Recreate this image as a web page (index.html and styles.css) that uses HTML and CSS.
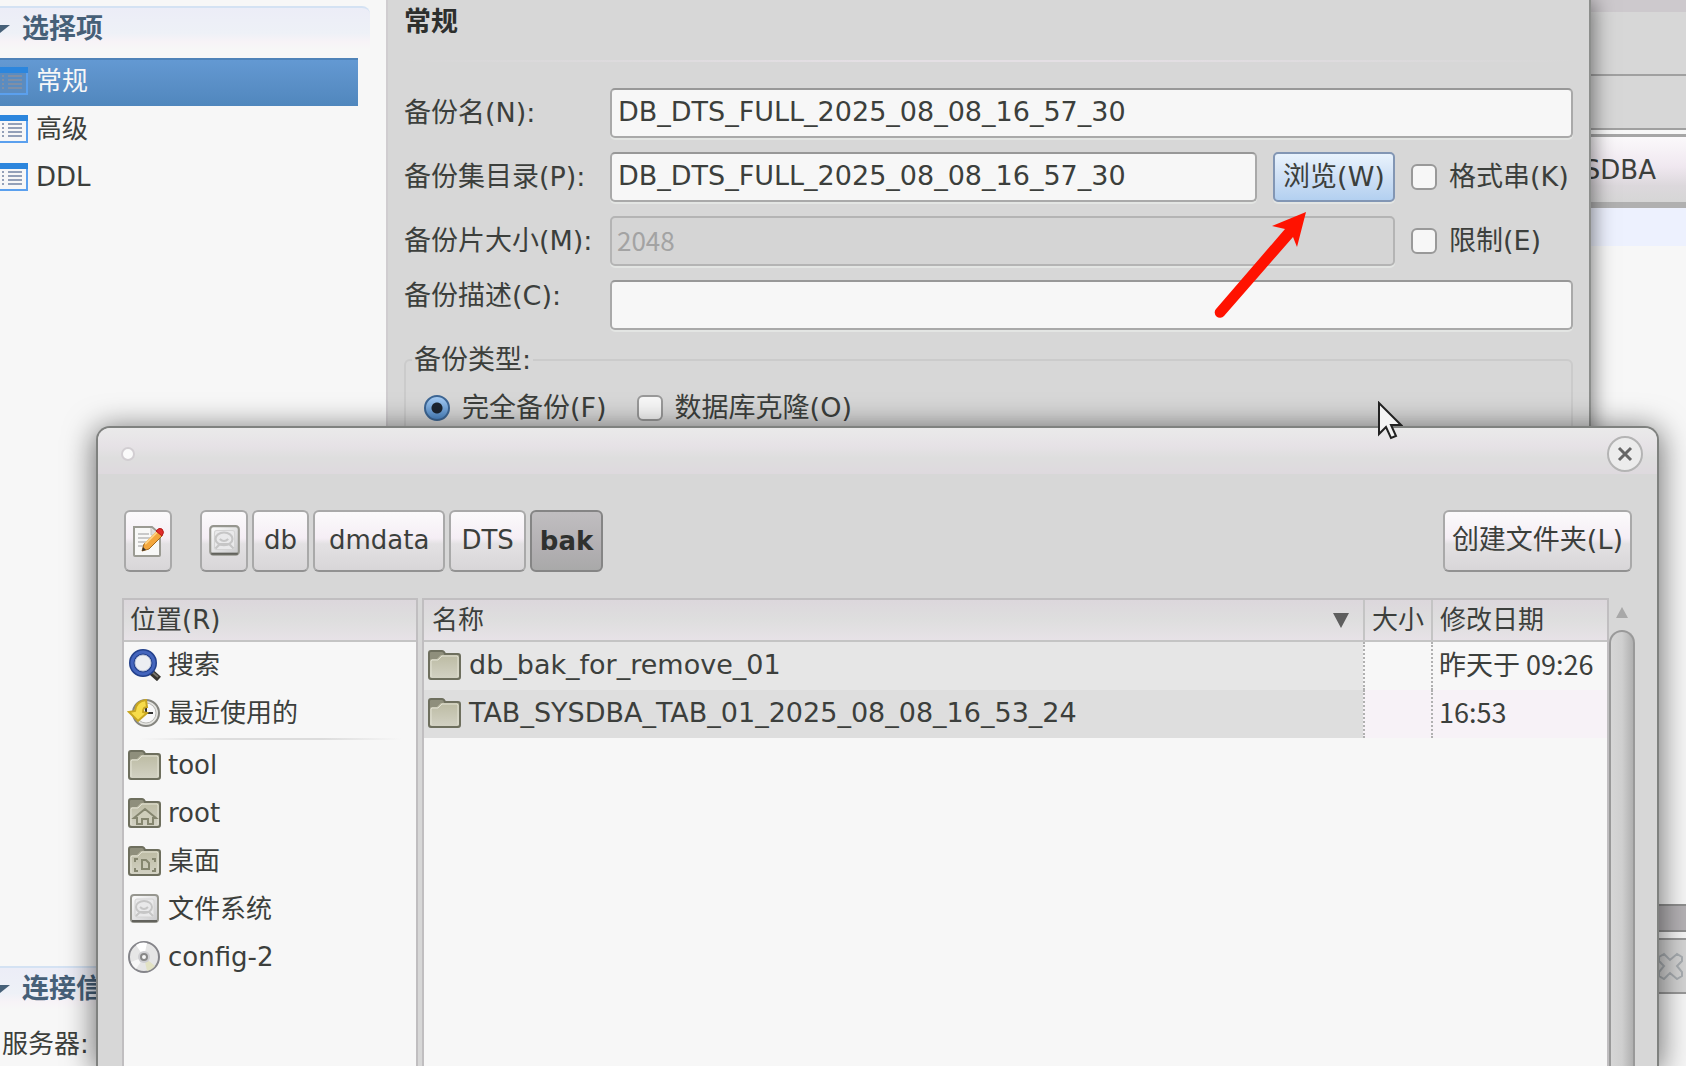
FILE: index.html
```html
<!DOCTYPE html>
<html lang="zh-CN">
<head>
    <meta charset="UTF-8">
    <meta name="viewport" content="width=device-width, initial-scale=1.0">
    <title>新建库备份</title>
    <link rel="stylesheet" href="styles.css">
</head>
<body>
    <!-- Shared icons -->
    <svg class="sprite" aria-hidden="true">
        <defs>
            <linearGradient id="folder-fill" x1="0" y1="0" x2="0" y2="1">
                <stop offset="0" stop-color="#bcbba3"/>
                <stop offset="1" stop-color="#d2d1c3"/>
            </linearGradient>
            <linearGradient id="metal" x1="0" y1="0" x2="1" y2="1">
                <stop offset="0" stop-color="#fdfdfd"/>
                <stop offset="1" stop-color="#c9c9cb"/>
            </linearGradient>
            <symbol id="i-page" viewBox="0 0 28 28">
                <path d="M0 1h28v27H0z" fill="#5ba0ee" stroke="none"/>
                <path d="M0 0h28v6H0z" fill="#2c86dd" stroke="none"/>
                <path d="M0 6h26v20H0z" stroke="none"/>
                <path d="M8 9h14M8 13h14M8 17h14M8 21h14M2 9h2M2 13h2M2 17h2M2 21h2" stroke-width="2"/>
            </symbol>
            <symbol id="i-folder" viewBox="0 0 34 32">
                <path d="M2 8V4q0-2 2-2h11q2 0 3 3h13q2 0 2 2v21q0 2-2 2H4q-2 0-2-2z" fill="#8f8f7c" stroke="#6e6f5e" stroke-width="2"/>
                <path d="M3 12q0-2 2-2h5l4-4h16q2 0 2 2v19q0 2-2 2H5q-2 0-2-2z" fill="url(#folder-fill)"/>
                <path d="M4 28V12l1-1h6l4-4h15l1 1v20" fill="none" stroke="#e2e1d3"/>
            </symbol>
            <symbol id="i-drive" viewBox="0 0 34 32">
                <rect x="4" y="2" width="27" height="27" rx="3" fill="url(#metal)" stroke="#96968f" stroke-width="2"/>
                <path d="M5 28h25" stroke="#62625c" stroke-width="2"/>
                <rect x="8" y="6" width="19" height="18" rx="2" fill="#e9e9ea" stroke="#d4d4d4"/>
                <ellipse cx="17" cy="14" rx="8" ry="6" fill="none" stroke="#c6c6c6" stroke-width="2"/>
                <path d="M9 23l4-4h9l4 4M13 14q4 4 8 0" fill="none" stroke="#c6c6c6" stroke-width="2"/>
            </symbol>
        </defs>
    </svg>

    <div class="desktop">
        <!-- Main application -->
        <div class="app">
            <div class="app-menu"></div>
            <div class="app-toolbar"></div>
            <div class="app-toolbar app-toolbar-low"></div>
            <div class="app-tab">SDBA</div>
            <div class="app-line"></div>
            <div class="app-editor"></div>
            <div class="app-splitter"></div>
            <div class="app-views">
                <svg class="view-close" viewBox="0 0 28 28"><path d="M3 5l5-3 6 6 7-6 5 3v4l-5 5 5 6v4l-5 3-7-6-6 6-5-3v-4l5-6-5-5z" fill="none" stroke="#a9aeb2" stroke-width="2"/></svg>
            </div>
            <div class="app-footer"></div>
        </div>

        <!-- Backup dialog -->
        <div class="backup">
            <aside class="side">
                <h2 class="side-title"><span class="caret"></span>选择项</h2>
                <nav class="side-nav">
                    <button class="side-item active"><svg><use href="#i-page"/></svg>常规</button>
                    <button class="side-item"><svg><use href="#i-page"/></svg>高级</button>
                    <button class="side-item"><svg><use href="#i-page"/></svg>DDL</button>
                </nav>
                <h2 class="side-title side-title-low"><span class="caret"></span>连接信息</h2>
                <p class="side-server">服务器:</p>
            </aside>

            <main class="general">
                <h1>常规</h1>
                <form class="form">
                    <label for="name">备份名(N):</label>
                    <input id="name" class="field span-all" type="text" value="DB_DTS_FULL_2025_08_08_16_57_30">

                    <label for="dir">备份集目录(P):</label>
                    <input id="dir" class="field" type="text" value="DB_DTS_FULL_2025_08_08_16_57_30">
                    <button type="button" class="browse">浏览(W)</button>
                    <label class="check"><input type="checkbox">格式串(K)</label>

                    <label for="size">备份片大小(M):</label>
                    <input id="size" class="field span-two" type="text" value="2048" disabled>
                    <label class="check"><input type="checkbox">限制(E)</label>

                    <label for="desc" class="label-top">备份描述(C):</label>
                    <input id="desc" class="field span-all" type="text">

                    <fieldset class="types">
                        <legend>备份类型:</legend>
                        <label class="check"><input type="radio" name="type" checked>完全备份(F)</label>
                        <label class="check"><input type="checkbox">数据库克隆(O)</label>
                    </fieldset>
                </form>
            </main>

            <svg class="arrow" viewBox="0 0 100 115">
                <path d="M95 5L61 19l13 3L5 102a5 5 0 0 0 8 7l69-79 4 10z" fill="#ff1200"/>
            </svg>
        </div>

        <!-- Folder chooser -->
        <div class="chooser">
            <header class="titlebar">
                <span class="dot"></span>
                <button class="close" aria-label="关闭"><svg viewBox="0 0 16 16"><path d="M2 2l12 12M14 2L2 14" stroke="#666" stroke-width="3"/></svg></button>
            </header>

            <div class="toolbar">
                <button class="btn btn-icon btn-edit" aria-label="输入文件名">
                    <svg viewBox="0 0 34 34">
                        <path d="M3 3h18l8 7v21q0 1-1 1H4q-1 0-1-1z" fill="#f8f8f7" stroke="#9b9b93" stroke-width="2"/>
                        <path d="M20 4v7h8" fill="#ddd" stroke="#c4c4c0"/>
                        <path d="M7 10h11M7 14h12M7 18h8M7 22h6" stroke="#c9c9c9" stroke-width="2"/>
                        <path d="M11 27l2-7L26 7l5 5-13 13z" fill="#f3a63c" stroke="#a4681c"/>
                        <path d="M14 20L26 8" stroke="#ffd385" stroke-width="2"/>
                        <path d="M11 27l1-4 3 3z" fill="#333"/>
                        <path d="M25 7q3-4 6-2 3 3 0 7z" fill="#e02a2a" stroke="#b51a1a"/>
                    </svg>
                </button>
                <button class="btn btn-icon" aria-label="文件系统"><svg><use href="#i-drive"/></svg></button>
                <button class="btn">db</button>
                <button class="btn btn-wide">dmdata</button>
                <button class="btn">DTS</button>
                <button class="btn btn-current">bak</button>
                <button class="btn btn-create">创建文件夹(L)</button>
            </div>

            <div class="panes">
                <section class="places">
                    <h3>位置(R)</h3>
                    <button class="place">
                        <svg viewBox="0 0 34 32">
                            <path d="M23 22l9 8" stroke="#36342f" stroke-width="6"/>
                            <path d="M24 22l7 6" stroke="#77736b" stroke-width="2"/>
                            <circle cx="16" cy="14" r="11" fill="#eef0f4" stroke="#22408c" stroke-width="6"/>
                            <circle cx="16" cy="14" r="11" fill="none" stroke="#4465bd" stroke-width="3"/>
                            <circle cx="16" cy="14" r="8" fill="#eceef2" stroke="#b6bfd6"/>
                        </svg>搜索</button>
                    <button class="place">
                        <svg viewBox="0 0 34 32">
                            <circle cx="19" cy="16" r="13" fill="#e4e4e0" stroke="#85857f" stroke-width="2"/>
                            <circle cx="19" cy="16" r="10" fill="#f8f8f8" stroke="#b9b9b5"/>
                            <path d="M19 8v8h7" fill="none" stroke="#333" stroke-width="2"/>
                            <path d="M2 15l6-1q1-10 11-11l1 7q-4 0-4 5l4 1-9 8z" fill="#f7dc4a" stroke="#c8a620" stroke-width="2"/>
                        </svg>最近使用的</button>
                    <hr>
                    <button class="place"><svg><use href="#i-folder"/></svg>tool</button>
                    <button class="place">
                        <svg viewBox="0 0 34 32">
                            <use href="#i-folder"/>
                            <path d="M7 21l11-9 11 9h-3v6h-5v-5h-6v5h-5v-6z" fill="#cfcebb" stroke="#85866f" stroke-width="2"/>
                        </svg>root</button>
                    <button class="place">
                        <svg viewBox="0 0 34 32">
                            <use href="#i-folder"/>
                            <path d="M15 15h4l3 3v6h-7z" fill="none" stroke="#85866f" stroke-width="2"/>
                            <path d="M8 17v-3h3M25 14h3v3M8 23v3h3M25 26h3v-3" fill="none" stroke="#85866f" stroke-width="2"/>
                        </svg>桌面</button>
                    <button class="place"><svg><use href="#i-drive"/></svg>文件系统</button>
                    <button class="place">
                        <svg viewBox="0 0 34 32">
                            <circle cx="17" cy="16" r="15" fill="#e6e6e6" stroke="#85858a" stroke-width="2"/>
                            <path d="M17 16L9 4a14 14 0 0 1 11-2z" fill="#fff"/>
                            <path d="M17 16l11 9a14 14 0 0 1-8 5z" fill="#e2e2c4"/>
                            <path d="M17 16L4 21a14 14 0 0 0 5 7z" fill="#f7f7f7"/>
                            <circle cx="17" cy="16" r="6" fill="#cfcfd2"/>
                            <circle cx="17" cy="16" r="3" fill="#f7f7f7" stroke="#888" stroke-width="2"/>
                        </svg>config-2</button>
                </section>

                <section class="files">
                    <table>
                        <thead>
                            <tr>
                                <th class="col-name"><span class="head-name">名称<span class="sort"></span></span></th>
                                <th class="col-size">大小</th>
                                <th class="col-date">修改日期</th>
                            </tr>
                        </thead>
                        <tbody>
                            <tr>
                                <td class="col-name"><span class="file"><svg><use href="#i-folder"/></svg>db_bak_for_remove_01</span></td>
                                <td></td>
                                <td>昨天于 09:26</td>
                            </tr>
                            <tr>
                                <td class="col-name"><span class="file"><svg><use href="#i-folder"/></svg>TAB_SYSDBA_TAB_01_2025_08_08_16_53_24</span></td>
                                <td></td>
                                <td>16:53</td>
                            </tr>
                        </tbody>
                    </table>
                </section>

                <div class="scrollbar">
                    <span class="scroll-up"></span>
                    <span class="thumb"></span>
                </div>
            </div>
        </div>

        <svg class="pointer" viewBox="0 0 26 40">
            <path d="M2 2v31l7-7 5 11 5-2-5-11h10z" fill="#f4f4f4" stroke="#222" stroke-width="2"/>
        </svg>
    </div>
</body>
</html>
```

FILE: styles.css
```css
/* Reset */
* {
    box-sizing: border-box;
}

body, html {
    margin: 0;
    height: 100%;
    overflow: hidden;
    font-family: "DejaVu Sans", "Noto Sans CJK SC", sans-serif;
    font-size: 26px;
    line-height: 32px;
    color: #3c3f3c;
}

button, input {
    font: inherit;
    color: inherit;
}

h1, h2, h3, p {
    margin: 0;
    font-size: 26px;
}

button {
    cursor: pointer;
    white-space: nowrap;
}

.sprite {
    position: absolute;
    width: 0;
    height: 0;
}

.desktop {
    position: relative;
    height: 100vh;
    overflow: hidden;
}

/* Main application */
.app {
    height: 100%;
    display: flex;
    flex-direction: column;
    background: #f7f7f7;
}

.app-menu {
    height: 12px;
    background: #cdc9cd;
}

.app-toolbar {
    height: 64px;
    background: #d7d7d7;
    border-bottom: 2px solid #a0a0a0;
}

.app-toolbar-low {
    height: 54px;
}

.app-tab {
    display: flex;
    align-items: center;
    justify-content: flex-end;
    height: 74px;
    margin-top: 4px;
    padding-right: 30px;
    border-top: 3px solid #a6a6a6;
    border-bottom: 6px solid #b0b0b0;
    background: linear-gradient(#fbf9fb, #f0e8f0 45%, #dcd8dc 75%, #d6d6d6);
}

.app-line {
    height: 38px;
    background: #edf1fe;
}

.app-editor {
    flex: 1;
}

.app-splitter {
    height: 28px;
    border: solid #8f8f8f;
    border-width: 2px 0;
    background: #b5b2b5;
}

.app-views {
    display: flex;
    align-items: center;
    justify-content: flex-end;
    height: 56px;
    margin-top: 6px;
    padding-right: 2px;
    border: solid #999;
    border-width: 2px 0;
    background: #d4d4d4;
}

.view-close {
    width: 28px;
    height: 28px;
}

.app-footer {
    height: 72px;
}

/* Backup dialog */
.backup {
    position: absolute;
    inset: 0 95px 0 0;
    display: flex;
    background: #d7d7d7;
    border-right: 2px solid #8c8e8c;
    box-shadow: 2px 0 20px rgba(0, 0, 0, 0.5);
}

.side {
    display: flex;
    flex-direction: column;
    width: 388px;
    padding-top: 6px;
    background: #f7f7f7;
    border-right: 2px solid #d0cdd0;
}

.side-title {
    display: flex;
    align-items: center;
    gap: 12px;
    height: 44px;
    margin-right: 16px;
    border-top: 2px solid #d4e2f3;
    border-radius: 0 8px 0 0;
    background: linear-gradient(#ecedf7, #eef1f7 60%, #f7f3f7 80%, #f7f7f7);
    color: #466078;
    font-size: 27px;
}

.side-title-low {
    margin-top: auto;
}

.caret {
    border: solid transparent;
    border-width: 8px 10px 0 0;
    border-top-color: #466078;
}

.side-nav {
    display: flex;
    flex-direction: column;
    margin: 8px 28px 0 0;
}

.side-item {
    display: flex;
    align-items: center;
    gap: 8px;
    height: 48px;
    padding: 0 0 3px;
    border: none;
    background: none;
}

.side-item svg {
    width: 28px;
    height: 28px;
    fill: #f7f7f7;
    stroke: #93a0b8;
}

.side-item.active {
    background: linear-gradient(#4f83b8 2px, #6399d3 2px, #5b90c8 50%, #5087bd);
    color: #f7f7f7;
}

.side-item.active svg {
    fill: #5b8cc0;
    stroke: #7f8fa6;
}

.side-server {
    height: 56px;
    padding: 18px 0 0 2px;
}

/* General page */
.general {
    flex: 1;
    padding: 6px 16px 0;
}

.general h1 {
    height: 56px;
    border-bottom: 2px solid;
    border-image: linear-gradient(90deg, transparent, #e4dfe4 40%, #e4dfe4 60%, transparent) 1;
    color: #2d2f2d;
    font-size: 27px;
}

.form {
    display: grid;
    grid-template-columns: 190px 1fr 122px 162px;
    align-items: center;
    gap: 14px 16px;
    margin-top: 26px;
    font-size: 27px;
    white-space: nowrap;
}

.field {
    width: 100%;
    min-width: 0;
    height: 50px;
    padding: 0 6px 3px;
    border: 2px solid #a9a9a9;
    border-top-color: #989898;
    border-radius: 5px;
    background: #f7f7f7;
    box-shadow: 0 2px 0 #e3e5e3;
}

.field:disabled {
    padding: 0 5px 4px;
    border-color: #b4b4b4;
    background: #d5d5d5;
    color: #a3a3a3;
    font-family: "Noto Sans CJK SC", sans-serif;
    font-size: 26px;
}

.span-all {
    grid-column: 2 / -1;
}

.span-two {
    grid-column: 2 / 4;
}

.label-top {
    align-self: start;
}

.browse {
    height: 50px;
    padding: 0;
    border: 2px solid #8296b4;
    border-radius: 5px;
    background: linear-gradient(#e9f3fd, #cfe0f5 50%, #b3d0f0);
    box-shadow: 0 2px 0 #e3e5e3;
}

.check {
    display: flex;
    align-items: center;
    gap: 12px;
}

.check input {
    appearance: none;
    flex: none;
    width: 26px;
    height: 26px;
    margin: 0;
    border: 2px solid #999;
    border-radius: 6px;
    background: #f7f7f7;
}

.check input[type="radio"] {
    border-color: #3d6694;
    border-radius: 50%;
    background: radial-gradient(circle, #1c2530 0 5px, transparent 6px), linear-gradient(#a5cbf3, #4d88c6);
}

.types {
    grid-column: 1 / -1;
    display: flex;
    gap: 30px;
    height: 400px;
    margin: 0;
    padding: 16px 18px;
    border: 2px solid #cbcbcb;
    border-radius: 6px;
}

.types legend {
    margin-left: -12px;
    padding: 0 2px;
}

.types .check {
    height: 32px;
}

.arrow {
    position: absolute;
    top: 207px;
    right: 278px;
    width: 100px;
    height: 115px;
}

/* Folder chooser */
.chooser {
    position: absolute;
    inset: 426px 27px 0 96px;
    display: flex;
    flex-direction: column;
    border: 2px solid #7f817f;
    border-bottom: none;
    border-radius: 14px 14px 0 0;
    background: #d7d7d7;
    box-shadow: 0 4px 30px 2px rgba(0, 0, 0, 0.55);
}

.titlebar {
    display: flex;
    align-items: center;
    justify-content: space-between;
    height: 46px;
    padding: 5px 14px 0 23px;
    border-radius: 12px 12px 0 0;
    background: linear-gradient(#eaeaea, #e6e2e6 40%, #dedede 65%, #ded9de);
}

.dot {
    width: 14px;
    height: 14px;
    border: 2px solid #d2ced2;
    border-radius: 50%;
    background: #fafafa;
}

.close {
    display: flex;
    align-items: center;
    justify-content: center;
    width: 36px;
    height: 36px;
    padding: 0;
    border: 2px solid #b4b4b4;
    border-radius: 50%;
    background: #ececec;
}

.close svg {
    width: 16px;
    height: 16px;
}

.toolbar {
    display: flex;
    gap: 4px;
    padding: 36px 25px 26px 26px;
}

.btn {
    height: 62px;
    padding: 0 10px 2px;
    border: 2px solid #a9a9a9;
    border-bottom-color: #929292;
    border-radius: 6px;
    background: linear-gradient(#fbfafb, #f5eef5 45%, #e3e1e3 55%, #d8d6d8);
}

.btn-icon {
    width: 48px;
    padding: 0 4px;
}

.btn-icon svg {
    display: block;
    width: 36px;
    height: 34px;
}

.btn-edit {
    margin-right: 24px;
}

.btn-wide {
    padding: 0 14px 2px;
}

.btn-current {
    padding: 0 8px;
    border-color: #858585;
    background: linear-gradient(#c0bec0, #b3b0b3 60%, #a9a9a9);
    color: #2f312f;
    font-weight: bold;
}

.btn-create {
    margin-left: auto;
    padding: 0 7px 2px;
    font-size: 27px;
}

.panes {
    flex: 1;
    display: flex;
    padding: 0 22px 0 24px;
}

.places {
    display: flex;
    flex-direction: column;
    width: 296px;
    margin-right: 4px;
    border: 2px solid #c0bec0;
    border-bottom: none;
    background: #f7f7f7;
}

.places h3 {
    height: 42px;
    padding: 4px 6px;
    border-bottom: 2px solid #c4c4c4;
    background: linear-gradient(#dcd7dc, #dedede 50%, #e7e2e7);
    font-weight: normal;
}

.place {
    display: flex;
    align-items: center;
    gap: 7px;
    height: 48px;
    padding: 0 3px 3px;
    border: none;
    background: none;
}

.place svg, .file svg {
    flex: none;
    width: 34px;
    height: 32px;
}

.places hr {
    width: 90%;
    height: 2px;
    margin: 0 auto 2px;
    border: none;
    background: linear-gradient(90deg, transparent, #dcdcdc 30%, #dcdcdc 70%, transparent);
}

.files {
    flex: 1;
    border: 2px solid #c0bec0;
    border-bottom: none;
    background: #f7f7f7;
}

.files table {
    width: 100%;
    border-collapse: separate;
    border-spacing: 0;
    table-layout: fixed;
    white-space: nowrap;
}

.files th {
    height: 42px;
    padding: 0 0 0 7px;
    border-bottom: 2px solid #c4c4c4;
    border-left: 2px solid #c4c4c4;
    background: linear-gradient(#dcd7dc, #dedede 50%, #e7e2e7);
    font-weight: normal;
    text-align: left;
}

.files td {
    height: 48px;
    padding: 0 0 5px 6px;
    border-left: 2px dotted #b0b0b0;
    font-family: "Noto Sans CJK SC", sans-serif;
    font-size: 27px;
}

.files tr:nth-child(even) td {
    background: #f7f2f7;
}

.files .col-name {
    padding-left: 8px;
    border-left: none;
}

.files td.col-name {
    padding: 0 0 3px 3px;
    background: #e6e6e6;
    font-family: "DejaVu Sans", sans-serif;
}

.files tr:nth-child(even) td.col-name {
    background: #dedede;
}

.col-size {
    width: 68px;
}

.col-date {
    width: 176px;
}

.head-name {
    display: flex;
    align-items: center;
    justify-content: space-between;
    padding-right: 14px;
}

.sort {
    border: 8px solid transparent;
    border-top: 15px solid #5e5e5e;
    border-bottom: none;
}

.file {
    display: flex;
    align-items: center;
    gap: 8px;
}

/* Scrollbar */
.scrollbar {
    display: flex;
    flex-direction: column;
    align-items: center;
    gap: 12px;
    width: 26px;
    padding-top: 9px;
}

.scroll-up {
    border: 6px solid transparent;
    border-top: none;
    border-bottom: 11px solid #a8a8a8;
}

.thumb {
    flex: 1;
    width: 26px;
    border: 2px solid #999;
    border-bottom: none;
    border-radius: 13px 13px 0 0;
    background: linear-gradient(90deg, #d6d6d6, #cfcfcf 50%, #b0b0b0);
}

/* Mouse pointer */
.pointer {
    position: absolute;
    top: 401px;
    right: 283px;
    width: 26px;
    height: 40px;
}
```
